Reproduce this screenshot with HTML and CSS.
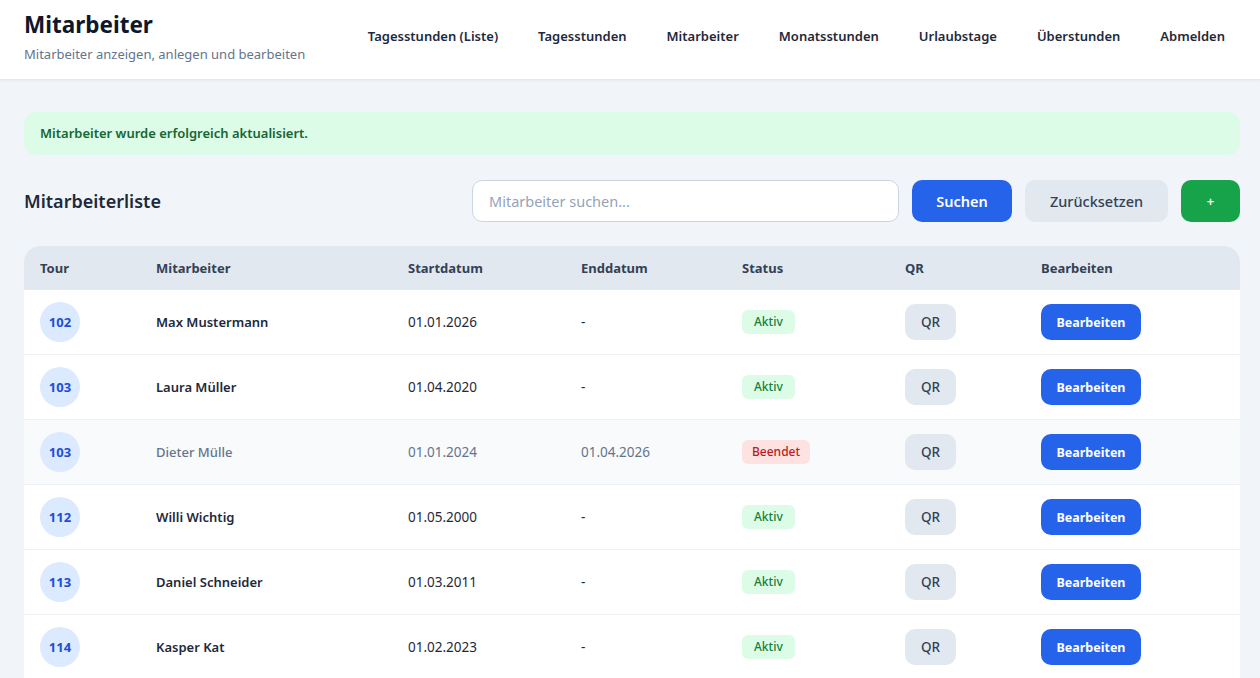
FILE: index.html
```html
<!DOCTYPE html>
<html lang="de">
<head>
	<meta charset="utf-8">
	<title>Mitarbeiter</title>
	<link rel="stylesheet" href="styles.css">
</head>
<body>

<header class="topbar">
	<div class="brand">
		<h1>Mitarbeiter</h1>
		<p class="subtitle">Mitarbeiter anzeigen, anlegen und bearbeiten</p>
	</div>
	<nav class="mainnav">
		<a href="#">Tagesstunden (Liste)</a>
		<a href="#">Tagesstunden</a>
		<a href="#">Mitarbeiter</a>
		<a href="#">Monatsstunden</a>
		<a href="#">Urlaubstage</a>
		<a href="#">Überstunden</a>
		<a href="#">Abmelden</a>
	</nav>
</header>

<main class="content">
	<div class="alert">Mitarbeiter wurde erfolgreich aktualisiert.</div>

	<div class="toolbar">
		<h2>Mitarbeiterliste</h2>
		<form class="search">
			<input type="text" class="search-input" placeholder="Mitarbeiter suchen...">
			<button type="button" class="btn btn-blue btn-lg btn-search">Suchen</button>
			<button type="button" class="btn btn-grey btn-lg btn-reset">Zurücksetzen</button>
			<button type="button" class="btn btn-green btn-lg btn-add">+</button>
		</form>
	</div>

	<div class="card">
		<table class="list">
			<colgroup>
				<col class="c-tour">
				<col class="c-name">
				<col class="c-start">
				<col class="c-end">
				<col class="c-status">
				<col class="c-qr">
				<col>
			</colgroup>
			<thead>
				<tr>
					<th>Tour</th>
					<th>Mitarbeiter</th>
					<th>Startdatum</th>
					<th>Enddatum</th>
					<th>Status</th>
					<th>QR</th>
					<th>Bearbeiten</th>
				</tr>
			</thead>
			<tbody>
				<tr>
					<td><span class="tour">102</span></td>
					<td class="name">Max Mustermann</td>
					<td>01.01.2026</td>
					<td>-</td>
					<td><span class="pill pill-on">Aktiv</span></td>
					<td><button type="button" class="btn btn-grey btn-qr">QR</button></td>
					<td><button type="button" class="btn btn-blue btn-edit">Bearbeiten</button></td>
				</tr>
				<tr>
					<td><span class="tour">103</span></td>
					<td class="name">Laura Müller</td>
					<td>01.04.2020</td>
					<td>-</td>
					<td><span class="pill pill-on">Aktiv</span></td>
					<td><button type="button" class="btn btn-grey btn-qr">QR</button></td>
					<td><button type="button" class="btn btn-blue btn-edit">Bearbeiten</button></td>
				</tr>
				<tr class="ended">
					<td><span class="tour">103</span></td>
					<td class="name">Dieter Mülle</td>
					<td>01.01.2024</td>
					<td>01.04.2026</td>
					<td><span class="pill pill-off">Beendet</span></td>
					<td><button type="button" class="btn btn-grey btn-qr">QR</button></td>
					<td><button type="button" class="btn btn-blue btn-edit">Bearbeiten</button></td>
				</tr>
				<tr>
					<td><span class="tour">112</span></td>
					<td class="name">Willi Wichtig</td>
					<td>01.05.2000</td>
					<td>-</td>
					<td><span class="pill pill-on">Aktiv</span></td>
					<td><button type="button" class="btn btn-grey btn-qr">QR</button></td>
					<td><button type="button" class="btn btn-blue btn-edit">Bearbeiten</button></td>
				</tr>
				<tr>
					<td><span class="tour">113</span></td>
					<td class="name">Daniel Schneider</td>
					<td>01.03.2011</td>
					<td>-</td>
					<td><span class="pill pill-on">Aktiv</span></td>
					<td><button type="button" class="btn btn-grey btn-qr">QR</button></td>
					<td><button type="button" class="btn btn-blue btn-edit">Bearbeiten</button></td>
				</tr>
				<tr>
					<td><span class="tour">114</span></td>
					<td class="name">Kasper Kat</td>
					<td>01.02.2023</td>
					<td>-</td>
					<td><span class="pill pill-on">Aktiv</span></td>
					<td><button type="button" class="btn btn-grey btn-qr">QR</button></td>
					<td><button type="button" class="btn btn-blue btn-edit">Bearbeiten</button></td>
				</tr>
			</tbody>
		</table>
	</div>
</main>

</body>
</html>
```

FILE: styles.css
```css
	body {
		margin: 0;
		background-color: #F1F5F9;
		font-family: "Noto Sans", "Open Sans", sans-serif;
		color: #1E293B;
	}
	.topbar {
		display: flex;
		align-items: center;
		justify-content: space-between;
		height: 80px;
		box-sizing: border-box;
		padding: 0 24px 0 24px;
		background-color: #FFFFFF;
		border-bottom: 1px solid #E2E8F0;
		box-shadow: 0 1px 3px rgba(15,23,42,0.05);
	}
	.brand {
		margin-top: -5px;
		white-space: nowrap;
	}
	.brand h1 {
		margin: 0;
		font-size: 22.5px;
		line-height: 30px;
		font-weight: 700;
		color: #0F172A;
	}
	.subtitle {
		margin: 4px 0 0 0;
		font-size: 13px;
		line-height: 20px;
		color: #64748B;
	}
	.mainnav {
		display: flex;
		gap: 18px;
		margin-top: -8px;
		white-space: nowrap;
	}
	.mainnav a {
		padding: 8px 11px;
		font-size: 13px;
		font-weight: 600;
		color: #1E293B;
		text-decoration: none;
	}
	.content {
		padding: 32px 20px 32px 24px;
	}
	.alert {
		padding: 12px 16px;
		border-radius: 12px;
		background-color: #DCFCE7;
		color: #166534;
		font-size: 13px;
		line-height: 19px;
		font-weight: 600;
	}
	.toolbar {
		display: flex;
		align-items: center;
		justify-content: space-between;
		margin: 25px 0 24px 0;
	}
	.toolbar h2 {
		margin: 0;
		font-size: 18px;
		font-weight: 600;
		color: #1E293B;
	}
	.search {
		display: flex;
		gap: 13px;
	}
	.search-input {
		width: 427px;
		height: 42px;
		box-sizing: border-box;
		padding: 0 16px;
		border: 1px solid #CBD5E1;
		border-radius: 10px;
		font-family: inherit;
		font-size: 14.5px;
		color: #1E293B;
		background: #FFFFFF;
	}
	.search-input::placeholder {
		color: #94A3B8;
	}
	.btn {
		border: none;
		padding: 0;
		font-family: inherit;
		font-weight: 600;
		cursor: pointer;
	}
	.btn-lg {
		height: 42px;
		border-radius: 10px;
		font-size: 14.5px;
	}
	.btn-search {
		width: 100px;
	}
	.btn-reset {
		width: 143px;
		font-weight: 500;
	}
	.btn-add {
		width: 59px;
		font-size: 13px;
	}
	.btn-blue {
		background-color: #2563EB;
		color: #FFFFFF;
	}
	.btn-grey {
		background-color: #E2E8F0;
		color: #334155;
	}
	.btn-green {
		background-color: #16A34A;
		color: #FFFFFF;
	}
	.card {
		background-color: #FFFFFF;
		border-radius: 16px 16px 0 0;
		overflow: hidden;
	}
	table.list {
		width: 100%;
		border-collapse: collapse;
		table-layout: fixed;
	}
	col.c-tour { width: 116px; }
	col.c-name { width: 252px; }
	col.c-start { width: 173px; }
	col.c-end { width: 161px; }
	col.c-status { width: 163px; }
	col.c-qr { width: 136px; }
	table.list th {
		height: 44px;
		padding: 0 16px;
		background-color: #E2E8F0;
		text-align: left;
		font-size: 13px;
		font-weight: 700;
		color: #334155;
	}
	table.list td {
		height: 64px;
		padding: 0 16px;
		border-bottom: 1px solid #EEF2F7;
		font-size: 13.5px;
		color: #1E293B;
	}
	table.list td.name {
		font-size: 13px;
		font-weight: 600;
	}
	tr.ended td {
		background-color: #F8FAFC;
		color: #64748B;
	}
	table.list tr.ended td.name {
		font-weight: 500;
		color: #64748B;
	}
	.tour {
		display: inline-flex;
		align-items: center;
		justify-content: center;
		width: 40px;
		height: 40px;
		border-radius: 50%;
		background-color: #DBEAFE;
		color: #1D4ED8;
		font-size: 13px;
		font-weight: 700;
	}
	.pill {
		display: inline-block;
		padding: 3px 12px;
		border-radius: 6px;
		font-size: 12px;
		line-height: 18px;
		font-weight: 500;
	}
	.pill-on {
		background-color: #DCFCE7;
		color: #15803D;
	}
	.pill-off {
		padding: 3px 10px;
		background-color: #FEE2E2;
		color: #B91C1C;
	}
	.btn-qr {
		width: 51px;
		height: 36px;
		border-radius: 10px;
		font-size: 13.5px;
		font-weight: 500;
	}
	.btn-edit {
		width: 100px;
		height: 36px;
		border-radius: 10px;
		font-size: 12.5px;
		font-weight: 700;
	}
```
